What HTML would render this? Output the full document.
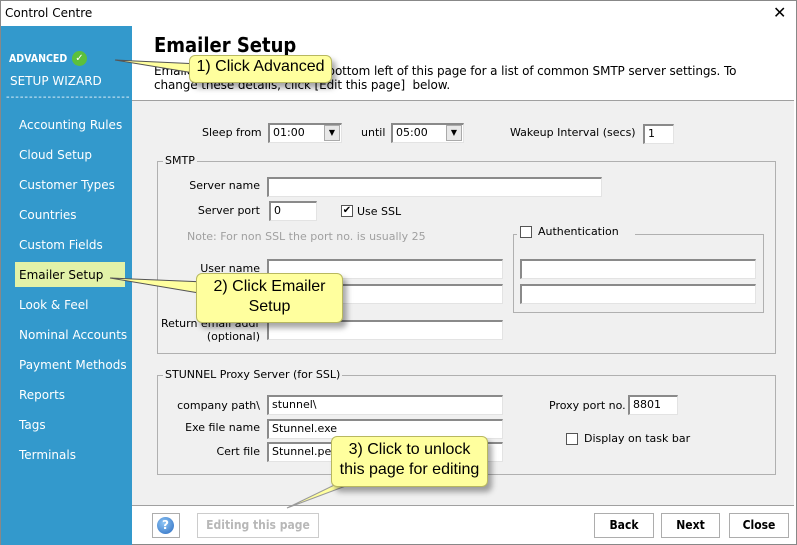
<!DOCTYPE html>
<html><head><meta charset="utf-8"><style>
*{box-sizing:border-box;margin:0;padding:0}
body{width:797px;height:545px;position:relative;overflow:hidden;background:#fff;font-family:"DejaVu Sans","Liberation Sans",sans-serif;font-size:11px;color:#000}
.a{position:absolute;white-space:nowrap}
.win{position:absolute;left:0;top:0;width:797px;height:545px;border:1px solid #888}
.side{position:absolute;left:1px;top:26px;width:131px;height:519px;background:#3399cc}
.si{position:absolute;left:19px;color:#fff;font-size:12px}
.inp{position:absolute;background:#fff;border:1px solid #e3e3e3;border-top:2px solid #8a8a8a;border-left:2px solid #8a8a8a;font-size:11px;padding:2px 3px;line-height:12px}
.grp{position:absolute;border:1px solid #b0b0b0}
.leg{position:absolute;background:#f0f0f0;padding:0 2px;font-size:11px}
.cb{position:absolute;width:12px;height:12px;background:#fff;border:1px solid #555;font-size:10px;line-height:10px;text-align:center}
.btn{position:absolute;top:513px;height:25px;border:1px solid #adadad;background:#fff;font-size:12px;font-weight:bold;text-align:center;line-height:23px;font-family:"DejaVu Sans Condensed","DejaVu Sans",sans-serif}
.call{position:absolute;background:#ffff9e;border:1px solid #b8b860;border-radius:6px;box-shadow:4px 5px 6px rgba(0,0,0,.35);font-family:"Liberation Sans",sans-serif;font-size:16px;text-align:center;line-height:20px;color:#000}
.lbl{position:absolute;text-align:right;white-space:nowrap}
</style></head><body>
<div class="win"></div>
<div class="a" style="left:5px;top:6px;font-size:12px">Control Centre</div>
<div class="a" style="left:773px;top:3px;font-size:16px">✕</div>
<div class="side"></div>
<div class="a" style="left:9px;top:53px;color:#fff;font-weight:bold;font-size:10.5px;font-family:'DejaVu Sans Condensed','DejaVu Sans',sans-serif">ADVANCED</div>
<div class="a" style="left:72px;top:51px;width:15px;height:15px;border-radius:50%;background:#5cc03c;color:#fff;font-size:10px;text-align:center;line-height:15px">✓</div>
<div class="a" style="left:10px;top:74px;color:#fff;font-size:12px">SETUP WIZARD</div>
<div class="a" style="left:6px;top:92px;color:#fff;font-size:10px;letter-spacing:1px">---------------------------</div>
<div class="si" style="top:118px">Accounting Rules</div>
<div class="si" style="top:148px">Cloud Setup</div>
<div class="si" style="top:178px">Customer Types</div>
<div class="si" style="top:208px">Countries</div>
<div class="si" style="top:238px">Custom Fields</div>
<div class="a" style="left:15px;top:262px;width:110px;height:25px;background:#e2f2a8"></div>
<div class="si" style="top:268px;color:#000">Emailer Setup</div>
<div class="si" style="top:298px">Look &amp; Feel</div>
<div class="si" style="top:328px">Nominal Accounts</div>
<div class="si" style="top:358px">Payment Methods</div>
<div class="si" style="top:388px">Reports</div>
<div class="si" style="top:418px">Tags</div>
<div class="si" style="top:448px">Terminals</div>

<div class="a" style="left:154px;top:33px;font-size:20px;font-weight:bold;font-family:'DejaVu Sans Condensed','DejaVu Sans',sans-serif">Emailer Setup</div>
<div class="a" style="left:154px;top:64px;font-size:12px;line-height:14px;letter-spacing:-0.1px">Emailer Setup - Click on ? on bottom left of this page for a list of common SMTP server settings. To<br>change these details, click [Edit this page]&nbsp; below.</div>
<div class="a" style="left:132px;top:100px;width:662px;height:406px;background:#f0f0f0;border-top:1px solid #a0a0a0;border-bottom:1px solid #a0a0a0"></div>

<div class="a" style="left:202px;top:126px">Sleep from</div>
<div class="inp" style="left:268px;top:123px;width:74px;height:20px">01:00</div>
<div class="a" style="left:324px;top:125px;width:16px;height:16px;background:#e8e8e8;border:1px solid #aaa;font-size:8px;text-align:center;line-height:14px">▼</div>
<div class="a" style="left:361px;top:126px">until</div>
<div class="inp" style="left:391px;top:123px;width:73px;height:20px">05:00</div>
<div class="a" style="left:446px;top:125px;width:16px;height:16px;background:#e8e8e8;border:1px solid #aaa;font-size:8px;text-align:center;line-height:14px">▼</div>
<div class="a" style="left:510px;top:126px">Wakeup Interval (secs)</div>
<div class="inp" style="left:643px;top:124px;width:31px;height:20px">1</div>

<div class="grp" style="left:157px;top:161px;width:619px;height:193px"></div>
<div class="leg" style="left:163px;top:154px">SMTP</div>
<div class="lbl" style="left:160px;width:100px;top:179px">Server name</div>
<div class="inp" style="left:267px;top:177px;width:335px;height:20px"></div>
<div class="lbl" style="left:160px;width:100px;top:204px">Server port</div>
<div class="inp" style="left:269px;top:201px;width:48px;height:20px">0</div>
<div class="cb" style="left:341px;top:205px">✔</div>
<div class="a" style="left:357px;top:205px">Use SSL</div>
<div class="a" style="left:187px;top:230px;color:#a0a0a0">Note: For non SSL the port no. is usually 25</div>
<div class="grp" style="left:513px;top:234px;width:251px;height:79px"></div>
<div class="leg" style="left:517px;top:225px;width:118px;height:16px"></div>
<div class="cb" style="left:520px;top:226px"></div>
<div class="a" style="left:538px;top:225px">Authentication</div>
<div class="inp" style="left:520px;top:259px;width:236px;height:20px"></div>
<div class="inp" style="left:520px;top:284px;width:236px;height:20px"></div>
<div class="lbl" style="left:160px;width:100px;top:262px">User name</div>
<div class="inp" style="left:267px;top:259px;width:236px;height:20px"></div>
<div class="inp" style="left:267px;top:284px;width:236px;height:20px"></div>
<div class="lbl" style="left:140px;width:120px;top:317px">Return email addr</div>
<div class="lbl" style="left:160px;width:100px;top:330px">(optional)</div>
<div class="inp" style="left:267px;top:320px;width:236px;height:20px"></div>

<div class="grp" style="left:157px;top:375px;width:619px;height:100px"></div>
<div class="leg" style="left:163px;top:368px">STUNNEL Proxy Server (for SSL)</div>
<div class="lbl" style="left:150px;width:110px;top:399px">company path\</div>
<div class="inp" style="left:267px;top:395px;width:236px;height:20px">stunnel\</div>
<div class="lbl" style="left:150px;width:110px;top:421px">Exe file name</div>
<div class="inp" style="left:267px;top:419px;width:236px;height:20px">Stunnel.exe</div>
<div class="lbl" style="left:150px;width:110px;top:445px">Cert file</div>
<div class="inp" style="left:267px;top:442px;width:236px;height:20px">Stunnel.pem</div>
<div class="a" style="left:549px;top:399px">Proxy port no.</div>
<div class="inp" style="left:628px;top:395px;width:50px;height:20px">8801</div>
<div class="cb" style="left:566px;top:433px"></div>
<div class="a" style="left:584px;top:432px">Display on task bar</div>

<div class="a" style="left:152px;top:513px;width:28px;height:25px;border:1px solid #adadad;background:#fff"></div>
<div class="a" style="left:157px;top:517px;width:17px;height:17px;border-radius:50%;background:radial-gradient(circle at 40% 35%,#8ec5f5,#2a6bc0);color:#fff;font-weight:bold;font-size:12px;text-align:center;line-height:17px">?</div>
<div class="btn" style="left:197px;width:122px;color:#b8b8b8;border-color:#ccc;font-weight:bold">Editing this page</div>
<div class="btn" style="left:594px;width:60px">Back</div>
<div class="btn" style="left:661px;width:59px">Next</div>
<div class="btn" style="left:729px;width:60px">Close</div>

<svg class="a" style="left:0;top:0" width="797" height="545">
<polygon points="115,60 200,64 200,74" fill="#ffff9e" stroke="#555" stroke-width="1"/>
<polygon points="110,278 205,282 205,294" fill="#ffff9e" stroke="#555" stroke-width="1"/>
<polygon points="287,508 355,475 375,475" fill="#ffff9e" stroke="#999" stroke-width="1"/>
</svg>
<div class="call" style="left:189px;top:55px;width:143px;height:28px;line-height:22px">1) Click Advanced</div>
<div class="call" style="left:196px;top:273px;width:147px;height:50px;padding-top:3px">2) Click Emailer<br>Setup</div>
<div class="call" style="left:331px;top:436px;width:157px;height:51px;padding-top:3px">3) Click to unlock<br>this page for editing</div>
</body></html>
